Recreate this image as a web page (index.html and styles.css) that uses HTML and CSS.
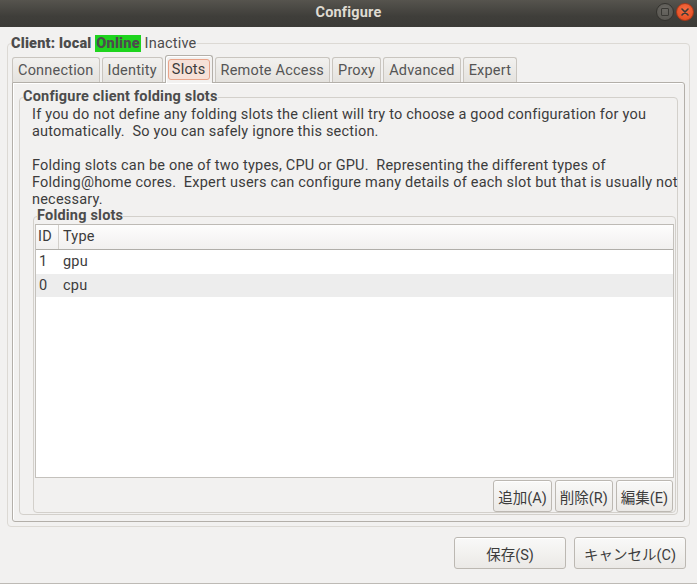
FILE: index.html
```html
<!DOCTYPE html>
<html lang="en">
<head>
<meta charset="utf-8">
<title>Configure</title>
<link rel="stylesheet" href="styles.css">
</head>
<body>
<div class="window">
  <header class="titlebar">
    <span class="tb-spacer"></span>
    <span class="title">Configure</span>
    <div class="wm-buttons">
      <span class="wm wm-max"><span class="wm-square"></span></span>
      <span class="wm wm-close">
        <svg width="8" height="8" viewBox="0 0 8 8"><path d="M1 1 L7 7 M7 1 L1 7" stroke="#3c3b37" stroke-width="1.6" stroke-linecap="round"/></svg>
      </span>
    </div>
  </header>
  <main class="content">
    <fieldset class="group client-group">
      <legend class="legend client-legend"><b>Client: local</b> <b class="online">Online</b> <span class="inactive">Inactive</span></legend>
      <div class="tabs">
        <div class="tab">Connection</div>
        <div class="tab">Identity</div>
        <div class="tab active"><span class="tab-label">Slots</span></div>
        <div class="tab">Remote Access</div>
        <div class="tab">Proxy</div>
        <div class="tab">Advanced</div>
        <div class="tab">Expert</div>
      </div>
      <div class="tab-panel">
        <fieldset class="group slots-group">
          <legend class="legend slots-legend">Configure client folding slots</legend>
          <p class="intro">If you do not define any folding slots the client will try to choose a good configuration for you<br>automatically.&nbsp; So you can safely ignore this section.<br><br>Folding slots can be one of two types, CPU or GPU.&nbsp; Representing the different types of<br>Folding@home cores.&nbsp; Expert users can configure many details of each slot but that is usually not<br>necessary.</p>
          <fieldset class="group list-group">
            <legend class="legend list-legend">Folding slots</legend>
            <div class="tree">
              <div class="tree-row tree-head">
                <div class="cell cell-id">ID</div>
                <div class="cell cell-type">Type</div>
              </div>
              <div class="tree-row">
                <div class="cell cell-id">1</div>
                <div class="cell cell-type">gpu</div>
              </div>
              <div class="tree-row odd">
                <div class="cell cell-id">0</div>
                <div class="cell cell-type">cpu</div>
              </div>
            </div>
            <div class="row-buttons">
              <button class="btn small">追加(A)</button>
              <button class="btn small">削除(R)</button>
              <button class="btn small">編集(E)</button>
            </div>
          </fieldset>
        </fieldset>
      </div>
    </fieldset>
    <div class="dialog-buttons">
      <button class="btn wide">保存(S)</button>
      <button class="btn wide">キャンセル(C)</button>
    </div>
  </main>
</div>
</body>
</html>
```
FILE: styles.css
```css
* { box-sizing: border-box; }
html, body { margin: 0; padding: 0; }
body {
  width: 697px;
  height: 584px;
  overflow: hidden;
  background: #f2f1f0;
  font-family: Roboto, "Noto Sans CJK JP", sans-serif;
  font-size: 14.5px;
  letter-spacing: 0.2px;
  color: #3c3c3c;
}
.window {
  width: 697px;
  height: 584px;
  border-bottom: 1px solid #bdbab5;
  display: flex;
  flex-direction: column;
}
.titlebar {
  height: 27px;
  flex: none;
  display: grid;
  grid-template-columns: 1fr auto 1fr;
  align-items: center;
  background: linear-gradient(#56544e, #3f3e3a 60%, #3c3b37);
}
.title {
  color: #dfdbd2;
  font-weight: bold;
  font-size: 14.5px;
  margin-top: -2px;
}
.wm-buttons {
  justify-self: end;
  display: flex;
  gap: 2px;
  margin-right: 3px;
  margin-top: -3px;
}
.wm {
  width: 18px;
  height: 18px;
  border-radius: 50%;
  display: flex;
  align-items: center;
  justify-content: center;
}
.wm-max {
  background: radial-gradient(circle at 50% 35%, #6a6863, #54524d);
  border: 1px solid #34332f;
}
.wm-square {
  width: 8px;
  height: 8px;
  border: 1.5px solid #3a3935;
  border-radius: 1px;
}
.wm-close {
  background: radial-gradient(circle at 50% 35%, #f36d43, #e2471b);
  border: 1px solid #a9381a;
}
.content {
  flex: 1;
  padding: 7px 11px 0 7px;
  display: flex;
  flex-direction: column;
}
.group {
  margin: 0;
  border: 1px solid #d3d0cb;
  border-radius: 4px;
  min-width: 0;
}
.legend {
  padding: 0;
  font-weight: bold;
  color: #4c4c4c;
  line-height: 16px;
}
.client-group {
  margin-right: -4px;
  padding: 2px 4px 4px 4px;
  border-color: #dcd9d4;
}
.client-legend {
  margin-left: -1px;
  line-height: 18px;
  padding-top: 1px;
}
.online {
  background: #1ed41e;
  padding: 0 1px;
}
.inactive { font-weight: normal; }
.tabs {
  display: flex;
  align-items: flex-end;
  height: 27px;
  gap: 2px;
  padding-left: 0;
}
.tab {
  height: 25px;
  padding: 0 5px;
  line-height: 25px;
  border: 1px solid #c9c5bf;
  border-bottom: none;
  border-radius: 3px 3px 0 0;
  background: linear-gradient(#f2f1ef, #e4e2de);
  color: #555;
  white-space: nowrap;
}
.tab.active {
  height: 28px;
  margin-bottom: -1px;
  padding: 3px 2px 0;
  background: #f2f1f0;
  border-color: #b3afa9;
  box-shadow: inset 1px 1px 0 #fff;
  position: relative;
  z-index: 1;
  color: #3c3c3c;
}
.tab-label {
  display: block;
  height: 21px;
  line-height: 20px;
  padding: 0 3px;
  border: 1px solid #e8a48a;
  border-radius: 3px;
  background: #f6e1d8;
}
.tab-panel {
  border: 1px solid #b3afa9;
  border-radius: 0 3px 3px 3px;
  box-shadow: inset 1px 1px 0 #fff;
  padding: 6px 6px 6px 6px;
  height: 440px;
}
.slots-group {
  padding: 0 1px 1px 13px;
  height: 100%;
}
.slots-legend {
  margin-left: -10px;
}
.intro {
  margin: 1px 0 0 -1px;
  line-height: 17px;
  white-space: nowrap;
}
.list-group {
  margin-top: 0;
  padding: 0 1px 0 1px;
}
.list-legend {
  margin-left: 2px;
}
.tree {
  height: 254px;
  background: #fff;
  border: 1px solid #c4c1bc;
  border-top-color: #bdbab5;
}
.tree-row {
  display: grid;
  grid-template-columns: 23px 1fr;
  height: 24px;
  line-height: 24px;
}
.tree-row.odd { background: #ededed; height: 23px; line-height: 23px; }
.tree-head {
  height: 25px;
  background: linear-gradient(#fdfdfd, #f1f0ef);
  border-bottom: 1px solid #b0aea9;
}
.cell-id { padding-left: 3px; }
.tree-head .cell-id { padding-left: 2px; border-right: 1px solid #d3d0cb; }
.cell-type { padding-left: 4px; }
.row-buttons {
  display: flex;
  justify-content: flex-end;
  gap: 3px;
  margin: 2px 1px 0 0;
}
.btn {
  font-family: Roboto, "Noto Sans CJK JP", sans-serif;
  font-size: 14.5px;
  letter-spacing: 0;
  color: #3c3c3c;
  height: 32px;
  border: 1px solid #bcb8b2;
  border-radius: 3px;
  background: linear-gradient(#f9f9f8, #ebe9e6);
  box-shadow: inset 0 1px 0 #fff;
  padding: 0 4px;
  margin: 0;
}
.dialog-buttons {
  display: flex;
  justify-content: flex-end;
  gap: 8px;
  margin-top: 10px;
}
.btn.wide { width: 112px; }
```
